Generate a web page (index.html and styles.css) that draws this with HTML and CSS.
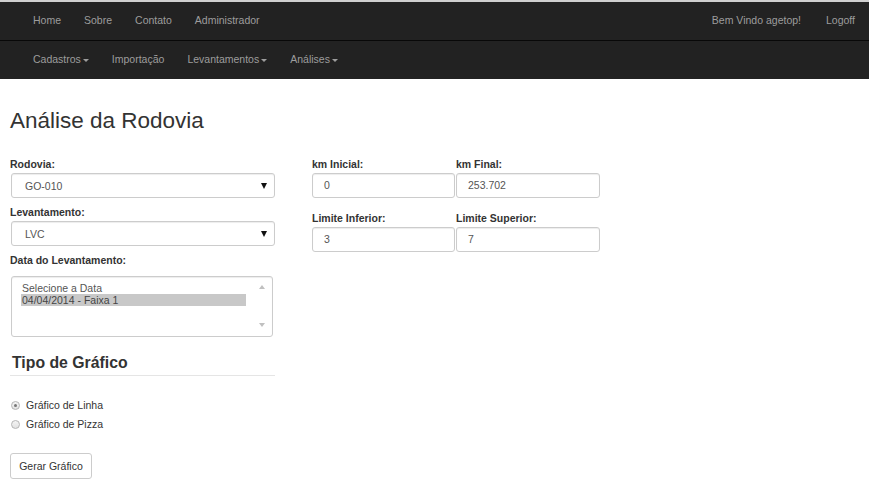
FILE: index.html
```html
<!DOCTYPE html>
<html lang="pt">
<head>
<meta charset="utf-8">
<title>Análise da Rodovia</title>
<link rel="stylesheet" href="styles.css">
</head>
<body>
<header class="topbar">
  <nav class="nav nav-main">
    <ul class="nav-list">
      <li><a href="#">Home</a></li>
      <li><a href="#">Sobre</a></li>
      <li><a href="#">Contato</a></li>
      <li><a href="#">Administrador</a></li>
    </ul>
    <ul class="nav-list nav-right">
      <li><a href="#">Bem Vindo agetop!</a></li>
      <li><a href="#">Logoff</a></li>
    </ul>
  </nav>
  <nav class="nav nav-sub">
    <ul class="nav-list">
      <li><a href="#">Cadastros<span class="caret"></span></a></li>
      <li><a href="#">Importação</a></li>
      <li><a href="#">Levantamentos<span class="caret"></span></a></li>
      <li><a href="#">Análises<span class="caret"></span></a></li>
    </ul>
  </nav>
</header>
<main class="page">
  <h2 class="title">Análise da Rodovia</h2>
  <div class="form-row">
    <div class="col-left">
      <div class="group">
        <label class="lbl">Rodovia:</label>
        <div class="select"><span>GO-010</span><span class="arrow"></span></div>
      </div>
      <div class="group">
        <label class="lbl">Levantamento:</label>
        <div class="select"><span>LVC</span><span class="arrow"></span></div>
      </div>
      <div class="group">
        <label class="lbl lbl-gap">Data do Levantamento:</label>
        <div class="listbox">
          <div class="options">
            <div class="opt">Selecione a Data</div>
            <div class="opt opt-sel">04/04/2014 - Faixa 1</div>
          </div>
          <div class="scroll">
            <span class="sc-up"></span>
            <span class="sc-down"></span>
          </div>
        </div>
      </div>
      <h3 class="subtitle">Tipo de Gráfico</h3>
      <div class="radios">
        <label class="radio"><span class="rb rb-on"></span>Gráfico de Linha</label>
        <label class="radio"><span class="rb"></span>Gráfico de Pizza</label>
      </div>
      <button class="btn">Gerar Gráfico</button>
    </div>
    <div class="col-right">
      <div class="pair">
        <div class="field">
          <label class="lbl">km Inicial:</label>
          <div class="input">0</div>
        </div>
        <div class="field">
          <label class="lbl">km Final:</label>
          <div class="input">253.702</div>
        </div>
      </div>
      <div class="pair pair-2">
        <div class="field">
          <label class="lbl">Limite Inferior:</label>
          <div class="input">3</div>
        </div>
        <div class="field">
          <label class="lbl">Limite Superior:</label>
          <div class="input">7</div>
        </div>
      </div>
    </div>
  </div>
</main>
</body>
</html>
```
FILE: styles.css
```css
* { box-sizing: border-box; }
html, body { margin: 0; padding: 0; }
body {
  font-family: "Liberation Sans", Arial, sans-serif;
  font-size: 10.5px;
  color: #333;
  background: #fff;
}
.topbar { border-top: 2px solid #cfcfcf; }
.nav {
  background: #222;
  display: flex;
  justify-content: space-between;
  padding: 0 14px 0 21.5px;
}
.nav-main { height: 39px; border-bottom: 1px solid #080808; }
.nav-sub { height: 38px; }
.nav-list {
  list-style: none;
  margin: 0;
  padding: 0;
  display: flex;
  align-items: center;
}
.nav-list a {
  display: block;
  color: #9d9d9d;
  text-decoration: none;
  padding: 0 11.5px 2px;
  line-height: 34px;
}
.nav-right a { padding: 0 0 2px 24px; }
.nav-right li:first-child a { padding-right: 1px; }
.caret {
  display: inline-block;
  width: 0;
  height: 0;
  margin-left: 2px;
  vertical-align: middle;
  border-top: 3px solid #9d9d9d;
  border-left: 3px solid transparent;
  border-right: 3px solid transparent;
}
.page { padding: 0 10px; }
.title {
  font-size: 22.5px;
  font-weight: 400;
  margin: 28px 0 0;
  line-height: 28px;
  color: #333;
}
.form-row {
  display: flex;
  gap: 37px;
  margin-top: 23px;
}
.col-left { width: 265px; }
.col-right { width: 288px; }
.group { margin-bottom: 8px; }
.lbl {
  display: block;
  font-weight: bold;
  line-height: 13px;
  margin-bottom: 2px;
}
.lbl-gap { margin-bottom: 9px; }
.select {
  margin-left: 1px;
  height: 25px;
  border: 1px solid #ccc;
  border-radius: 3px;
  display: flex;
  align-items: center;
  justify-content: space-between;
  padding: 0 7px 0 13px;
  color: #555;
  box-shadow: inset 0 1px 1px rgba(0,0,0,.075);
}
.arrow {
  width: 0; height: 0;
  border-top: 6px solid #111;
  border-left: 3px solid transparent;
  border-right: 3px solid transparent;
}
.listbox {
  margin-left: 1px;
  width: 262px;
  height: 61px;
  border: 1px solid #ccc;
  border-radius: 3px;
  display: flex;
  padding: 5px 2px 5px 9px;
  color: #555;
  box-shadow: inset 0 1px 1px rgba(0,0,0,.075);
}
.options { flex: 1; }
.opt { line-height: 12px; padding-left: 1px; }
.opt-sel { background: #c8c8c8; width: 225px; color: #444; }
.scroll {
  width: 17px;
  display: flex;
  flex-direction: column;
  justify-content: space-between;
  align-items: center;
  padding: 3px 0 4px;
}
.sc-up, .sc-down {
  width: 0; height: 0;
  border-left: 3.5px solid transparent;
  border-right: 3.5px solid transparent;
}
.sc-up { border-bottom: 4px solid #c0c0c0; }
.sc-down { border-top: 4px solid #c0c0c0; }
.subtitle {
  font-size: 15.8px;
  margin: 16px 0 0;
  padding: 0 0 2px 2px;
  line-height: 20px;
  border-bottom: 1px solid #e5e5e5;
  color: #333;
}
.radios {
  margin-top: 23px;
  display: flex;
  flex-direction: column;
  gap: 6px;
}
.radio {
  display: flex;
  align-items: center;
  line-height: 13px;
  color: #333;
}
.rb {
  width: 9px; height: 9px;
  border-radius: 50%;
  border: 1px solid #b5b5b5;
  background: linear-gradient(#f4f4f4, #e2e2e2);
  margin: 0 6px 0 1px;
  display: flex;
  align-items: center;
  justify-content: center;
}
.rb-on::after {
  content: "";
  width: 3px; height: 3px;
  border-radius: 50%;
  background: #777;
}
.btn {
  margin-top: 22px;
  font-family: inherit;
  font-size: 10.5px;
  color: #333;
  background: #fff;
  border: 1px solid #ccc;
  border-radius: 3px;
  height: 26px;
  width: 82px;
  padding: 0;
}
.pair { display: flex; gap: 1px; }
.pair-2 { margin-top: 14px; }
.field { width: 143px; }
.field + .field { width: 144px; }
.input {
  height: 25px;
  border: 1px solid #ccc;
  border-radius: 3px;
  padding: 0 11px;
  line-height: 23px;
  color: #555;
  box-shadow: inset 0 1px 1px rgba(0,0,0,.075);
}
```
